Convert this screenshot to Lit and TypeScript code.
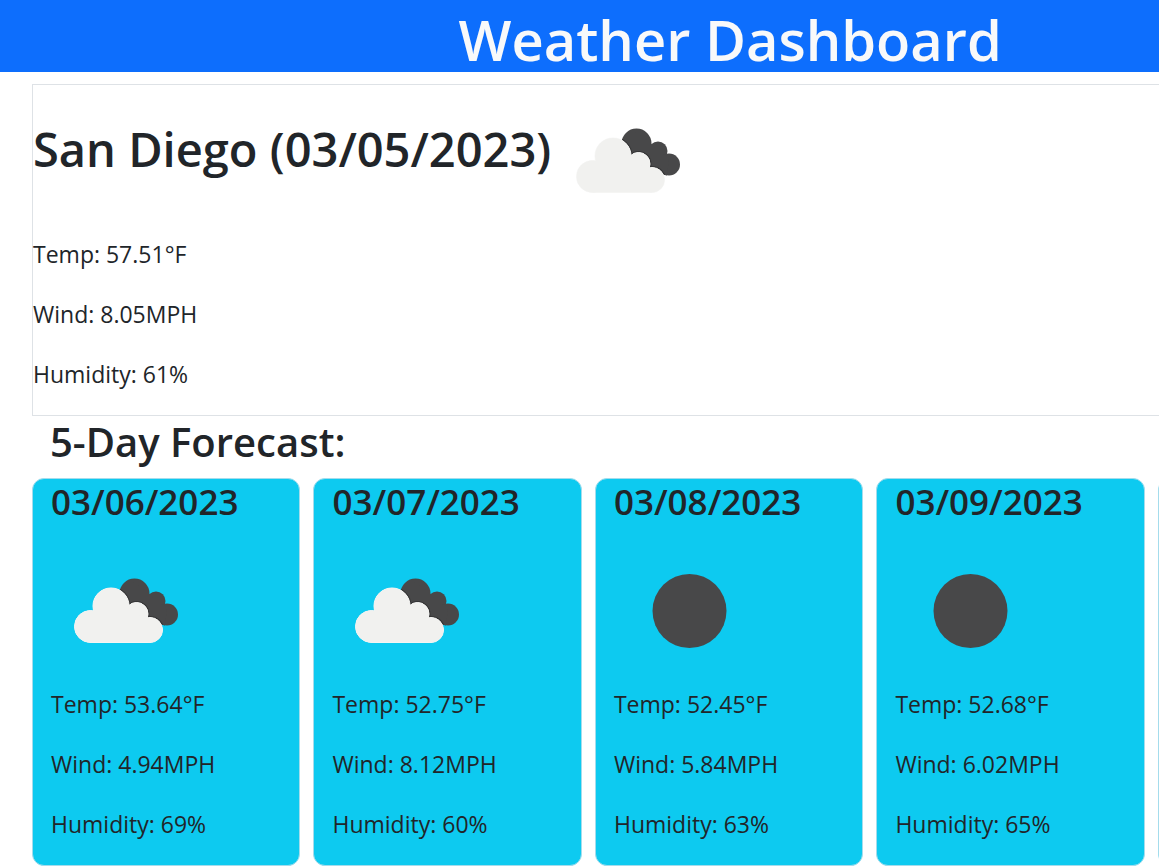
import { LitElement, html, css, svg } from "lit";
import { customElement, property } from "lit/decorators.js";

type Sky = "clouds" | "clear";

interface Reading {
  date: string;
  sky: Sky;
  temp: string;
  wind: string;
  humidity: string;
}

const today: Reading = {
  date: "03/05/2023", sky: "clouds", temp: "57.51", wind: "8.05", humidity: "61",
};

const forecast: Reading[] = [
  { date: "03/06/2023", sky: "clouds", temp: "53.64", wind: "4.94", humidity: "69" },
  { date: "03/07/2023", sky: "clouds", temp: "52.75", wind: "8.12", humidity: "60" },
  { date: "03/08/2023", sky: "clear", temp: "52.45", wind: "5.84", humidity: "63" },
  { date: "03/09/2023", sky: "clear", temp: "52.68", wind: "6.02", humidity: "65" },
  { date: "", sky: "clear", temp: "", wind: "", humidity: "" },
];

@customElement("weather-icon")
export class WeatherIcon extends LitElement {
  @property() sky: Sky = "clear";

  static styles = css`
    :host { display: block; width: 150px; height: 150px; flex: none; }
    .icon { display: block; width: 100%; height: 100%; }
    .dark { fill: #484849; }
    .edge { fill: #363637; stroke: #363637; stroke-width: 3; }
    .rim { fill: #f8f8f7; stroke: #f8f8f7; stroke-width: 1; }
    .light { fill: #f1f1ef; }
  `;

  private front() {
    return svg`
      <circle cx="39.5" cy="90.5" r="16"></circle>
      <circle cx="60" cy="70" r="18"></circle>
      <circle cx="85.5" cy="78" r="11.5"></circle>
      <circle cx="99" cy="94" r="12.5"></circle>
      <path d="M39.5 106.5V80L58 68L86 76L99 94V106.5Z"></path>`;
  }

  private back() {
    return svg`
      <circle cx="83.5" cy="57.5" r="15"></circle>
      <circle cx="105" cy="65" r="9.5"></circle>
      <circle cx="116" cy="78.5" r="11"></circle>
      <path d="M70 60L83 46L97 57L108 66L116 72L114 89.5L95 85Z"></path>`;
  }

  render() {
    return html`
      <svg class="icon" viewBox="0 0 150 150" aria-hidden="true">
        ${this.sky === "clear"
          ? svg`<circle class="dark" cx="75.5" cy="75" r="37"></circle>`
          : svg`
            <clipPath id="back">${this.back()}</clipPath>
            <g class="dark">${this.back()}</g>
            <g clip-path="url(#back)"><g class="edge">${this.front()}</g></g>
            <g class="rim">${this.front()}</g>
            <g class="light">${this.front()}</g>`}
      </svg>`;
  }
}

@customElement("app-root")
export class AppRoot extends LitElement {
  static styles = css`
    :host {
      display: block;
      overflow: hidden;
      background: #fff;
      color: #212529;
      font: 400 23px/36px "Open Sans", "Noto Sans", sans-serif;
    }
    h1, h2, h3, p { margin: 0; font-weight: 600; }
    .page { width: 126%; }
    .header {
      padding-top: 6px;
      background: #0d6efd;
      color: #f8f9fa;
      text-align: center;
    }
    .title { font-size: 56px; line-height: 66px; }
    .content { padding: 12px 34px 0 32px; }
    .current {
      border: 1px solid #dee2e6;
      padding: 1px 0 23px;
    }
    .place { display: flex; align-items: center; gap: 2px; }
    .city { font-size: 47px; line-height: 54px; padding-bottom: 24px; }
    .readings { display: grid; gap: 24px; }
    .readings p { font-weight: 400; }
    .heading { padding: 0 18px 10px; font-size: 40px; line-height: 52px; }
    .days { display: grid; grid-template-columns: repeat(5, 1fr); gap: 13px; }
    .day {
      box-sizing: border-box;
      padding: 0 18px 23px;
      border: 1px solid #a4dcec;
      border-radius: 12px;
      background: #0dcaf0;
    }
    .date { font-size: 35px; line-height: 45px; margin-bottom: 12px; }
  `;

  private readings(r: Reading) {
    return html`
      <div class="readings">
        <p>Temp: ${r.temp}°F</p>
        <p>Wind: ${r.wind}MPH</p>
        <p>Humidity: ${r.humidity}%</p>
      </div>`;
  }

  render() {
    return html`
      <div class="page">
        <header class="header"><h1 class="title">Weather Dashboard</h1></header>
        <main class="content">
          <section class="current">
            <div class="place">
              <h2 class="city">San Diego (${today.date})</h2>
              <weather-icon sky=${today.sky}></weather-icon>
            </div>
            ${this.readings(today)}
          </section>
          <h2 class="heading">5-Day Forecast:</h2>
          <div class="days">
            ${forecast.map((day) => html`
              <article class="day">
                ${day.date
                  ? html`
                    <h3 class="date">${day.date}</h3>
                    <weather-icon sky=${day.sky}></weather-icon>
                    ${this.readings(day)}`
                  : ""}
              </article>`)}
          </div>
        </main>
      </div>`;
  }
}
